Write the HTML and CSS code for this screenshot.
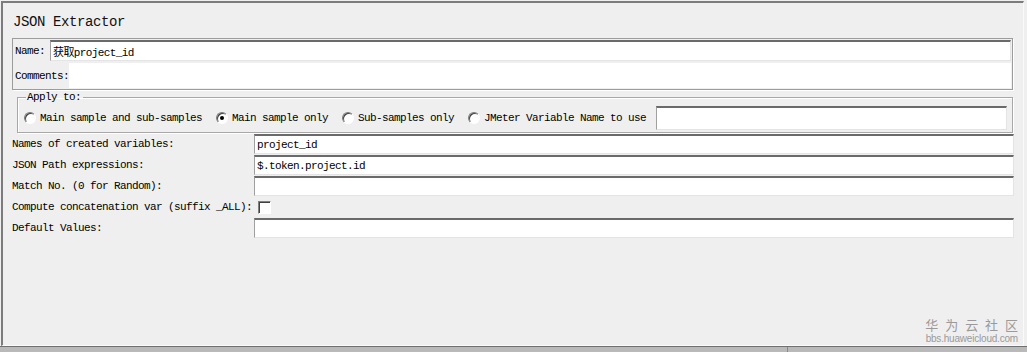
FILE: index.html
```html
<!DOCTYPE html>
<html lang="en">
<head>
    <meta charset="UTF-8">
    <title>JSON Extractor</title>
    <link rel="stylesheet" href="styles.css">
</head>
<body>
    <div class="frame">
        <div class="title">JSON Extractor</div>

        <div class="name-panel">
            <div class="name-row">
                <label class="lbl" for="name">Name:</label>
                <div class="field" id="name">获取project_id</div>
            </div>
            <div class="comment-row">
                <label class="lbl" for="comments">Comments:</label>
                <div class="comments" id="comments"></div>
            </div>
        </div>

        <fieldset class="apply">
            <legend>Apply to:</legend>
            <div class="radio-row">
                <span class="radio"></span><span class="opt">Main sample and sub-samples</span>
                <span class="radio checked"></span><span class="opt">Main sample only</span>
                <span class="radio"></span><span class="opt">Sub-samples only</span>
                <span class="radio"></span><span class="opt">JMeter Variable Name to use</span>
                <div class="field var-field"></div>
            </div>
        </fieldset>

        <div class="params">
            <span class="lbl">Names of created variables:</span>
            <div class="field">project_id</div>

            <span class="lbl">JSON Path expressions:</span>
            <div class="field">$.token.project.id</div>

            <span class="lbl">Match No. (0 for Random):</span>
            <div class="field"></div>

            <span class="lbl concat">Compute concatenation var (suffix _ALL):<span class="checkbox"></span></span>
            <div></div>

            <span class="lbl">Default Values:</span>
            <div class="field"></div>
        </div>

        <div class="watermark">
            <div class="wm-cn">华 为 云 社 区</div>
            <div class="wm-url">bbs.huaweicloud.com</div>
        </div>
    </div>
    <div class="statusbar">
        <span class="divider"></span>
    </div>
</body>
</html>
```

FILE: styles.css
```css
body {
    margin: 0;
    padding-top: 1px;
    background-color: #efefef;
    font-family: "Liberation Mono", "Noto Sans CJK SC", monospace;
    font-size: 11px;
    letter-spacing: -0.6px;
    color: #000;
}
.frame {
    position: relative;
    box-sizing: border-box;
    width: 1023px;
    height: 345px;
    margin-left: 1px;
    border-top: 2px solid #7c7c7c;
    border-left: 2px solid #7c7c7c;
    border-right: 1px solid #fafafa;
    border-bottom: 1px solid #fafafa;
}
.title {
    box-sizing: border-box;
    height: 35px;
    padding: 3px 0 0 10px;
    display: flex;
    align-items: center;
    font-size: 14px;
    letter-spacing: -0.4px;
    color: #111;
}
.lbl {
    white-space: nowrap;
}
.name-panel {
    box-sizing: border-box;
    width: 1001px;
    height: 52px;
    margin-left: 9px;
    padding: 1px 1px 0 2px;
    border: 1px solid #9c9c9c;
    box-shadow: 1px 1px 0 #fff;
}
.name-row {
    display: flex;
    align-items: center;
    height: 21px;
}
.name-row .lbl {
    width: 35px;
}
.name-row .field {
    flex: 1;
    height: 21px;
}
.comment-row {
    display: flex;
    align-items: center;
    height: 27px;
    margin-top: 1px;
}
.comments {
    flex: 1;
    height: 25px;
    background-color: #fff;
}
.field {
    box-sizing: border-box;
    height: 20px;
    padding: 0 2px;
    display: flex;
    align-items: center;
    background-color: #fff;
    border: 1px solid;
    border-top-width: 2px;
    border-color: #6a6a6a #e4e4e4 #e4e4e4 #a0a0a0;
    white-space: nowrap;
}
.apply {
    box-sizing: border-box;
    width: 996px;
    margin: 1px 0 0 14px;
    padding: 0 4px 2px 6px;
    border: 1px solid #a8a8a8;
    box-shadow: 1px 1px 0 #fff, inset 1px 1px 0 #fff;
}
.apply legend {
    padding: 0 2px 0 1px;
    margin-left: 2px;
    line-height: 12px;
}
.radio-row {
    display: flex;
    align-items: center;
    padding-top: 3px;
    white-space: nowrap;
}
.radio {
    position: relative;
    box-sizing: border-box;
    width: 12px;
    height: 12px;
    border: 1px solid;
    border-color: #7a7a7a #fff #fff #7a7a7a;
    border-radius: 50%;
    background-color: #fff;
    box-shadow: inset 1px 1px 0 #404040;
    margin-right: 4px;
}
.radio.checked::after {
    content: "";
    position: absolute;
    left: 3px;
    top: 3px;
    width: 4px;
    height: 4px;
    border-radius: 50%;
    background-color: #000;
}
.opt {
    margin-right: 14px;
}
.opt:nth-last-of-type(1) {
    margin-right: 10px;
}
.var-field {
    width: 351px;
    height: 24px;
}
.params {
    display: grid;
    grid-template-columns: 242px 1fr;
    grid-auto-rows: 20px;
    row-gap: 1px;
    align-items: center;
    padding: 1px 9px 0 9px;
}
.concat {
    display: flex;
    align-items: center;
}
.checkbox {
    flex: none;
    box-sizing: border-box;
    width: 13px;
    height: 13px;
    margin-left: 6px;
    background-color: #fff;
    border: 1px solid;
    border-color: #808080 #fff #fff #808080;
    box-shadow: inset 1px 1px 0 #404040;
}
.watermark {
    position: absolute;
    right: 5px;
    bottom: 1px;
    color: #9a9a9a;
    font-family: "Noto Sans CJK SC", "Liberation Sans", sans-serif;
    letter-spacing: 0;
    text-align: right;
}
.wm-cn {
    font-size: 13px;
    line-height: 14px;
    letter-spacing: 2px;
    margin-right: -2px;
}
.wm-url {
    margin-top: 1px;
    font-family: "Liberation Sans", sans-serif;
    font-size: 10px;
    line-height: 11px;
    letter-spacing: -0.2px;
}
.statusbar {
    display: flex;
    box-sizing: border-box;
    height: 6px;
    border-top: 1px solid #707070;
    background-color: #b9b9b9;
}
.divider {
    width: 1px;
    margin-left: 787px;
    background-color: #888;
}
```
